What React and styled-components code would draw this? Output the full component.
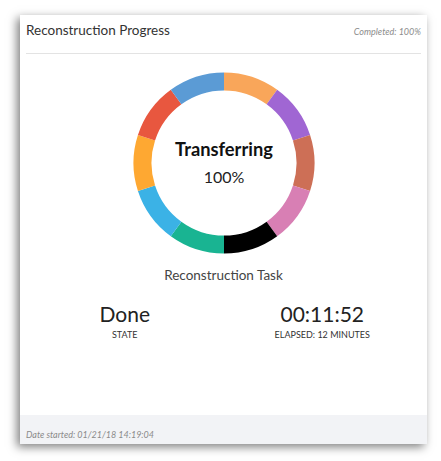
import React from 'react'
import styled, { createGlobalStyle } from 'styled-components'

const GlobalStyle = createGlobalStyle`
  html, body {
    margin: 0;
    padding: 0;
    background: #ffffff;
  }
  body {
    font-family: Lato, "Open Sans", sans-serif;
  }
`;

const segments = [
  '#f9a65a',
  '#a066d3',
  '#cd6f56',
  '#d87fb4',
  '#000000',
  '#19b492',
  '#3bb2e6',
  '#fea832',
  '#e8573f',
  '#5b9bd5',
];

const arcPath = (cx, cy, r, start, end) => {
  const rad = (a) => ((a - 90) * Math.PI) / 180;
  const x1 = cx + r * Math.cos(rad(start));
  const y1 = cy + r * Math.sin(rad(start));
  const x2 = cx + r * Math.cos(rad(end));
  const y2 = cy + r * Math.sin(rad(end));
  return `M ${x1} ${y1} A ${r} ${r} 0 0 1 ${x2} ${y2}`;
};

const Donut = () => {
  const step = 360 / segments.length;
  return (
    <svg width="182" height="182" viewBox="0 0 182 182">
      {segments.map((c, i) => (
        <path
          key={i}
          d={arcPath(91, 91, 81.5, i * step, (i + 1) * step)}
          stroke={c}
          strokeWidth="18"
          fill="none"
        />
      ))}
    </svg>
  );
};

const App = () => {
  return (
    <Page>
      <GlobalStyle />
      <Card>
        <Header>
          <Title>Reconstruction Progress</Title>
          <Completed>Completed: 100%</Completed>
        </Header>

        <Body>
          <Ring>
            <Donut />
            <RingCenter>
              <Status>Transferring</Status>
              <Percent>100%</Percent>
            </RingCenter>
          </Ring>

          <TaskLabel>Reconstruction Task</TaskLabel>

          <Stats>
            <Stat>
              <StatValue>Done</StatValue>
              <StatLabel>STATE</StatLabel>
            </Stat>
            <Stat>
              <StatValue>00:11:52</StatValue>
              <StatLabel>ELAPSED: 12 MINUTES</StatLabel>
            </Stat>
          </Stats>
        </Body>

        {/* footer */}
        <Footer>
          <FooterText>Date started: 01/21/18 14:19:04</FooterText>
        </Footer>
      </Card>
    </Page>
  )
}

const Page = styled.div`
  padding: 15px 14px 17px 20px;
`;

const Card = styled.section`
  width: 407px;
  height: 429px;
  background: #ffffff;
  display: flex;
  flex-direction: column;
  box-shadow: -3px 3px 9px rgba(0, 0, 0, 0.5);
`;

const Header = styled.header`
  height: 39px;
  box-sizing: border-box;
  margin: 0 6px;
  padding-top: 9px;
  display: flex;
  align-items: baseline;
  justify-content: space-between;
  border-bottom: 1px solid #e3e3e3;
`;

const Title = styled.h2`
  margin: 0;
  font-size: 13.5px;
  line-height: 1;
  font-weight: 400;
  color: #333333;
`;

const Completed = styled.span`
  font-size: 9px;
  line-height: 1;
  font-style: italic;
  color: #8c8c8c;
`;

const Body = styled.div`
  flex: 1;
  display: flex;
  flex-direction: column;
  align-items: center;
  padding: 0 6px;
`;

const Ring = styled.div`
  margin-top: 18px;
  display: grid;
  width: 182px;
  height: 182px;
  margin-left: 1px;
  & > * {
    grid-area: 1 / 1;
  }
`;

const RingCenter = styled.div`
  display: flex;
  flex-direction: column;
  align-items: center;
  padding-top: 68px;
`;

const Status = styled.div`
  font-size: 18.3px;
  line-height: 1;
  font-weight: 700;
  color: #111111;
`;

const Percent = styled.div`
  margin-top: 11px;
  font-size: 16px;
  line-height: 1;
  color: #222222;
`;

const TaskLabel = styled.div`
  margin-top: 15px;
  font-size: 13.5px;
  line-height: 1;
  color: #444444;
`;

const Stats = styled.div`
  margin-top: 20px;
  width: 100%;
  display: grid;
  grid-template-columns: 1fr 1fr;
`;

const Stat = styled.div`
  display: flex;
  flex-direction: column;
  align-items: center;
`;

const StatValue = styled.div`
  font-size: 21px;
  line-height: 1;
  color: #222222;
`;

const StatLabel = styled.div`
  margin-top: 6px;
  font-size: 9px;
  line-height: 1;
  font-weight: 400;
  color: #333333;
`;

const Footer = styled.footer`
  height: 29px;
  box-sizing: border-box;
  background: #f2f3f6;
  padding: 15px 6px 0;
`;

const FooterText = styled.div`
  font-size: 9px;
  line-height: 1;
  font-style: italic;
  color: #8a8a8a;
`;

export default App
